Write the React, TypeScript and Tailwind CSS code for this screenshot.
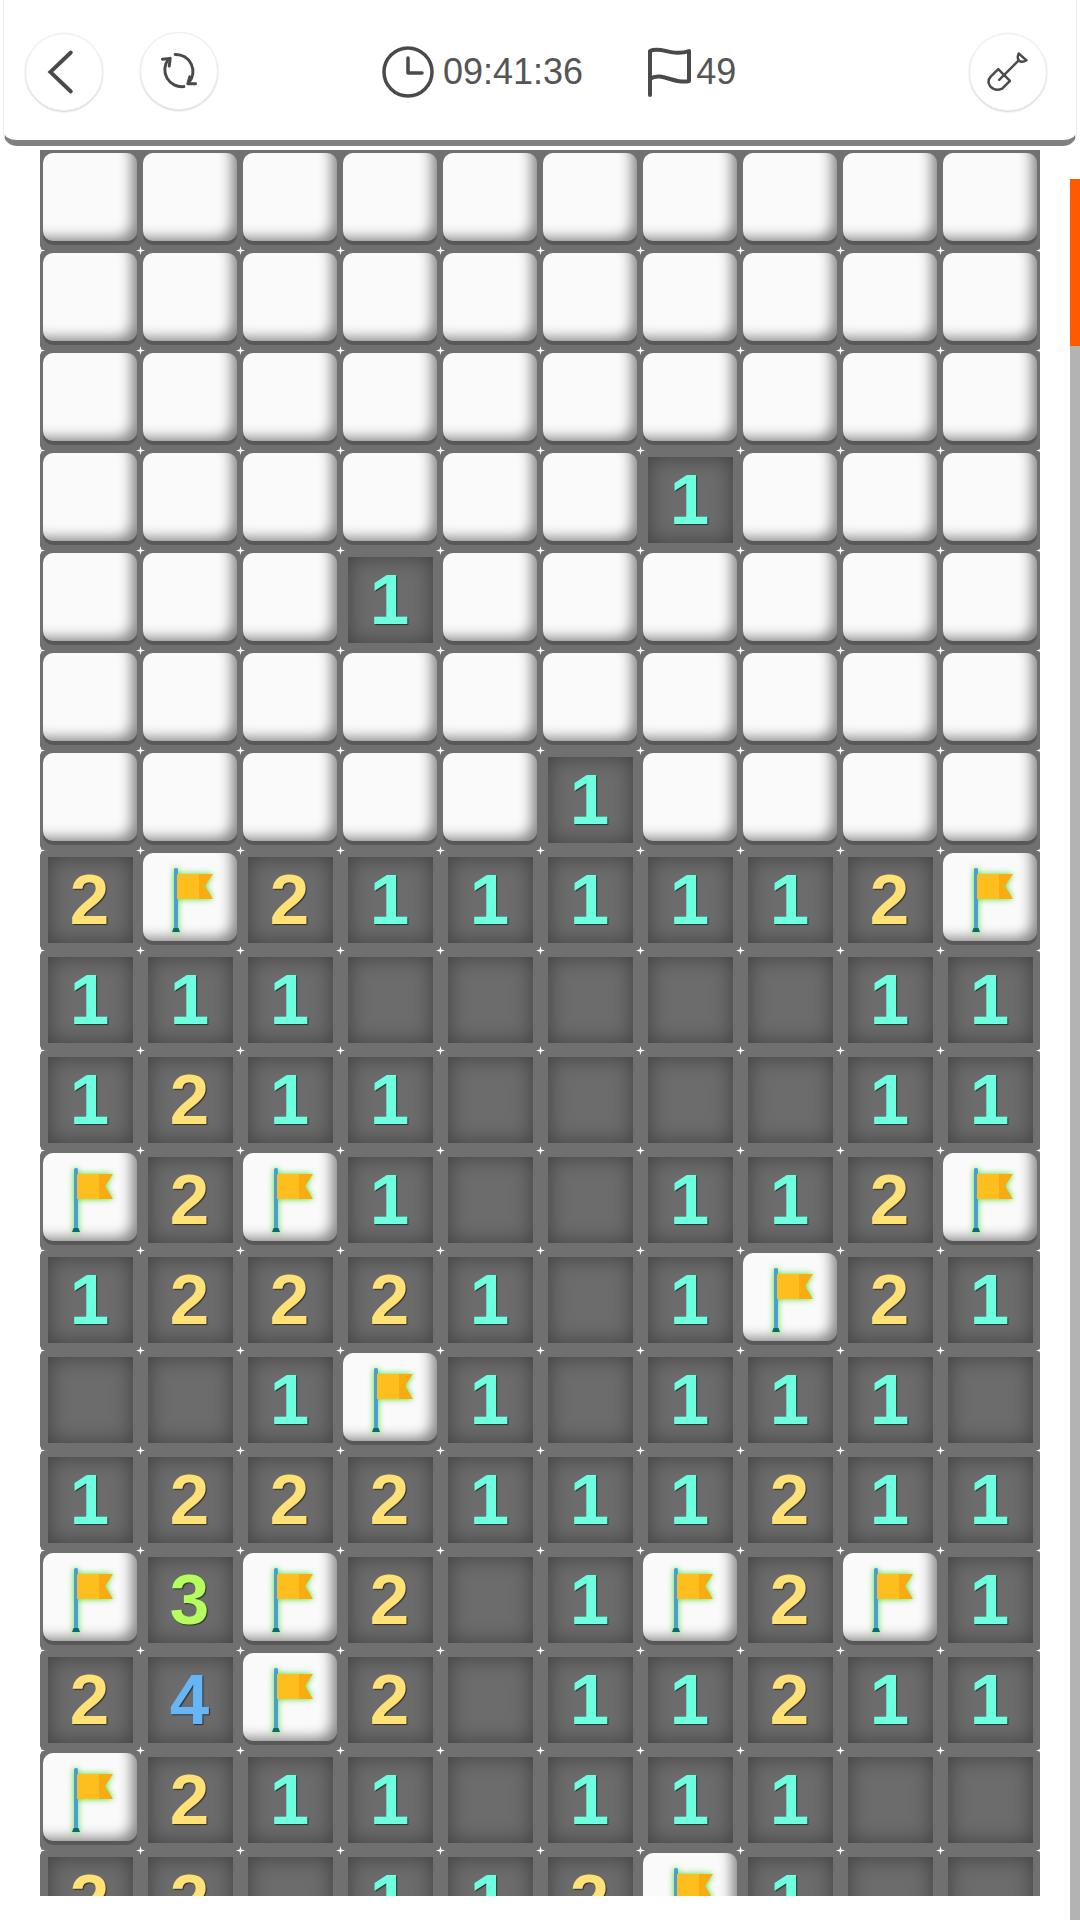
const rows = [
  "##########",
  "##########",
  "##########",
  "######1###",
  "###1######",
  "##########",
  "#####1####",
  "2F21111 2F".replace(" ", "1"),
  "111     11",
  "1211    11",
  "F2F1  112F",
  "12221 1F21",
  "  1F1 111 ",
  "1222111211",
  "F3F2 1F2F1",
  "24F2 11211",
  "F211 111  ",
  "22 112F1  ",
]

const digitColor: Record<string, string> = {
  "1": "text-[#6effe0]",
  "2": "text-[#ffe176]",
  "3": "text-[#b4ff5e]",
  "4": "text-[#66b5f5]",
}

function Sparkle({ className }: { className: string }) {
  return (
    <svg viewBox="0 0 9 9" className={`absolute w-[9px] h-[9px] z-10 ${className}`}>
      <path d="M4.5 0 L5.4 3.6 L9 4.5 L5.4 5.4 L4.5 9 L3.6 5.4 L0 4.5 L3.6 3.6 Z" fill="#fff" />
    </svg>
  )
}

function FlagIcon() {
  return (
    <svg viewBox="0 0 100 100" className="absolute top-0 left-[1px] w-[100px] h-[100px] drop-shadow-[0_0_3px_#4fdc30]">
      <rect x="33" y="18" width="4" height="63" rx="1.5" fill="#4a9fd0" />
      <path d="M31 82 L32.5 78 H37.5 L39 82 Z" fill="#0f6b6b" />
      <path d="M36 24 H58 V49 H36 Z" fill="#fdbe1e" />
      <path d="M58 24 H72 L64 36 L72 49 H58 Z" fill="#f9ab12" />
    </svg>
  )
}

function Cell({ value, row, col }: { value: string; row: number; col: number }) {
  const covered = value === "#" || value === "F"
  return (
    <div className="relative w-[100px] h-[100px]">
      {row > 0 && <Sparkle className="-top-[4.5px] -left-[4.5px]" />}
      {row > 0 && col === 9 && <Sparkle className="-top-[4.5px] -right-[4.5px]" />}
      {covered ? (
        <div className="pt-[3px] px-[3px] pb-[9px] h-full">
          <div className="w-full h-full rounded-[10px] bg-[#fafafa] shadow-[inset_-10px_-8px_13px_-5px_rgba(0,0,0,0.48),0_4px_0_#585858]" />
        </div>
      ) : (
        <div className="pt-[7px] pl-[8px] pr-[7px] pb-[7px] h-full">
          <div className="w-full h-full flex items-center justify-center bg-[#6c6c6c] shadow-[inset_0_0_22px_rgba(0,0,0,0.42)]">
            {value !== " " && (
              <span className={`-translate-x-[1px] -translate-y-[1px] font-bold text-[71px] leading-none [text-shadow:1px_1px_1px_#2f2f2f] ${digitColor[value]}`}>
                {value}
              </span>
            )}
          </div>
        </div>
      )}
      {value === "F" && <FlagIcon />}
    </div>
  )
}

function RoundButton({ className, children }: { className: string; children: React.ReactNode }) {
  return (
    <button className={`w-[78px] h-[78px] shrink-0 rounded-full bg-white border border-[#eeeeee] shadow-[0_1px_2px_rgba(0,0,0,0.18)] ${className}`}>
      {children}
    </button>
  )
}

export default function App() {
  return (
    <div className="w-[1080px] h-[1920px] overflow-hidden bg-white flex flex-col font-['Liberation_Sans',Arial,sans-serif]">
      <header className="mx-[3px] h-[146px] shrink-0 pt-[4px] pl-[21px] pr-[29px] flex items-center bg-white border-b-[6px] border-x border-x-[#eeeeee] border-b-[#808080] rounded-b-[14px]">
        <RoundButton className="">
          <svg viewBox="0 0 78 78" className="w-[76px] h-[76px]" fill="none" stroke="#4a4a4a" strokeWidth="4" strokeLinecap="round" strokeLinejoin="miter">
            <path d="M46 19 L25 39 L46 59" />
          </svg>
        </RoundButton>
        <RoundButton className="ml-[37px] -mt-[2px]">
          <svg viewBox="0 0 78 78" className="w-[76px] h-[76px]" fill="none" stroke="#4a4a4a" strokeWidth="3" strokeLinecap="round" strokeLinejoin="round">
            <path d="M35 22 A17.5 17.5 0 0 1 49 51" />
            <path d="M50 45 L48 52 L56 52" />
            <path d="M44 55 A17.5 17.5 0 0 1 28 27" />
            <path d="M22 27 L30 26 L29 34" />
          </svg>
        </RoundButton>
        <svg viewBox="0 0 52 52" className="ml-[164px] w-[52px] h-[52px] shrink-0" fill="none" stroke="#4a4a4a" strokeWidth="3.5" strokeLinecap="round" strokeLinejoin="round">
          <circle cx="26" cy="26" r="24" />
          <path d="M26 12 V27 H40" />
        </svg>
        <span className="ml-[9px] text-[36px] leading-none text-[#555555]">09:41:36</span>
        <svg viewBox="0 0 44 50" className="ml-[64px] w-[44px] h-[50px] shrink-0" fill="none" stroke="#4a4a4a" strokeWidth="4" strokeLinecap="round" strokeLinejoin="round">
          <path d="M3 48 V4 C14 -1 26 10 42 4 V34 C28 38 14 24 3 32" />
        </svg>
        <span className="ml-[5px] text-[36px] leading-none text-[#555555]">49</span>
        <RoundButton className="ml-auto">
          <svg viewBox="0 0 78 78" className="w-[76px] h-[76px]" fill="none" stroke="#4a4a4a" strokeWidth="2.5" strokeLinecap="round" strokeLinejoin="round">
            <path d="M29 36 L41 48 L33 56 Q26 59 21 54 Q17 49 21 44 Z" />
            <path d="M30 47 L50 27" />
            <path d="M50 20 L58 27 Q53 30 50 27 Q48 24 50 20 Z" />
          </svg>
        </RoundButton>
      </header>
      <div className="flex flex-1 min-h-0 pl-[40px]">
        <div className="mt-[4px] w-[1000px] h-[1746px] overflow-hidden bg-[#707070] grid grid-cols-10 auto-rows-[100px]">
          {rows.flatMap((row, r) =>
            row.split("").map((value, c) => <Cell key={`${r}-${c}`} value={value} row={r} col={c} />)
          )}
        </div>
        <div className="ml-[30px] mt-[33px] w-[10px] flex flex-col">
          <div className="h-[167px] bg-[#ff5a00]" />
          <div className="flex-1 bg-[#b3b3b3]" />
        </div>
      </div>
    </div>
  )
}
